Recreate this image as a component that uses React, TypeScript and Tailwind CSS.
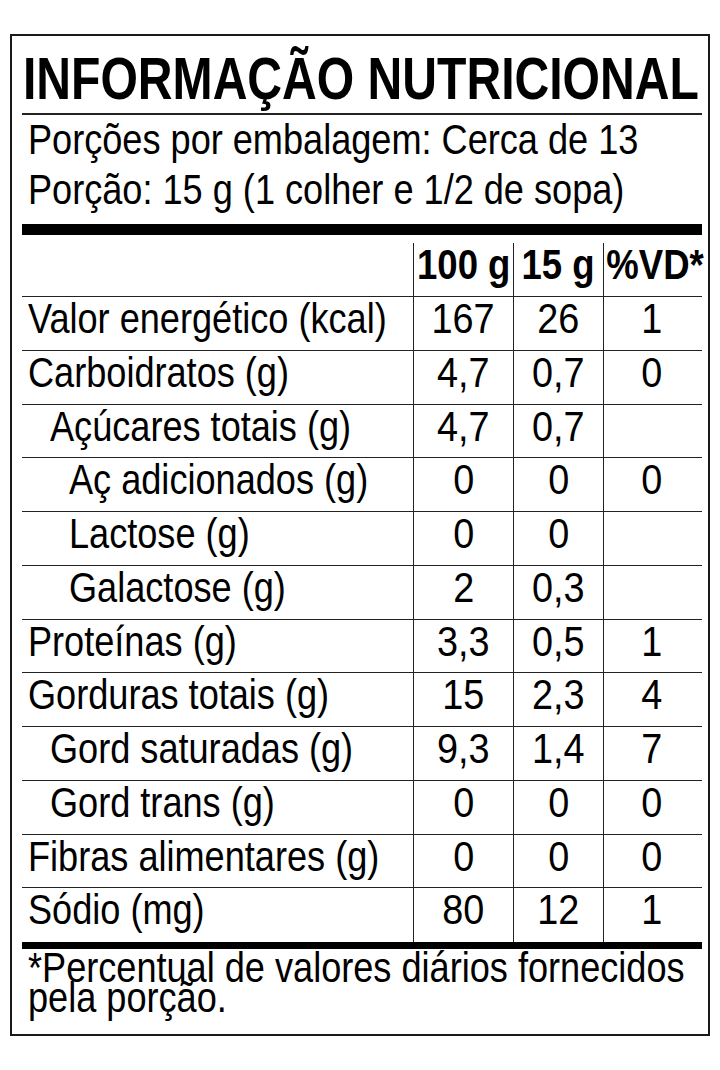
import React from "react";

type Row = { label: string; indent: 0 | 1 | 2; a: string; b: string; c: string };

const rows: Row[] = [
  { label: "Valor energético (kcal)", indent: 0, a: "167", b: "26", c: "1" },
  { label: "Carboidratos (g)", indent: 0, a: "4,7", b: "0,7", c: "0" },
  { label: "Açúcares totais (g)", indent: 1, a: "4,7", b: "0,7", c: "" },
  { label: "Aç adicionados (g)", indent: 2, a: "0", b: "0", c: "0" },
  { label: "Lactose (g)", indent: 2, a: "0", b: "0", c: "" },
  { label: "Galactose (g)", indent: 2, a: "2", b: "0,3", c: "" },
  { label: "Proteínas (g)", indent: 0, a: "3,3", b: "0,5", c: "1" },
  { label: "Gorduras totais (g)", indent: 0, a: "15", b: "2,3", c: "4" },
  { label: "Gord saturadas (g)", indent: 1, a: "9,3", b: "1,4", c: "7" },
  { label: "Gord trans (g)", indent: 1, a: "0", b: "0", c: "0" },
  { label: "Fibras alimentares (g)", indent: 0, a: "0", b: "0", c: "0" },
  { label: "Sódio (mg)", indent: 0, a: "80", b: "12", c: "1" },
];

const font = { fontFamily: '"Liberation Sans", Arial, sans-serif' };

function L({ children }: { children: React.ReactNode }) {
  return <span className="inline-block whitespace-nowrap origin-left scale-x-[0.86]">{children}</span>;
}

function V({ children }: { children: React.ReactNode }) {
  return <span className="inline-block whitespace-nowrap origin-center scale-x-[0.9]">{children}</span>;
}

function H({ children }: { children: React.ReactNode }) {
  return <span className="inline-block whitespace-nowrap origin-center scale-x-[0.87]">{children}</span>;
}

export default function App() {
  return (
    <div className="bg-white w-[720px] h-[1070px] pt-[34px] pl-[10px] text-black overflow-hidden" style={font}>
      <div className="w-[700px] h-[1002px] border-2 border-[#1a1a1a] pl-[10px] pr-[6px] flex flex-col">
        {/* Title */}
        <div className="h-[79px] pt-[14px] border-b-2 border-[#222]">
          <div className="text-[59px] font-bold leading-none whitespace-nowrap pl-[1px]">
            <span className="inline-block origin-left scale-x-[0.815]">INFORMAÇÃO NUTRICIONAL</span>
          </div>
        </div>
        {/* Serving */}
        <div className="h-[109px] pl-[6px] text-[42px] leading-[50px] whitespace-nowrap">
          <div>
            <L>Porções por embalagem: Cerca de 13</L>
          </div>
          <div>
            <L>Porção: 15 g (1 colher e 1/2 de sopa)</L>
          </div>
        </div>
        {/* Thick bar */}
        <div className="h-[11px] bg-black" />
        {/* Header */}
        <div className="h-[62px] flex items-end border-b-[1.5px] border-[#222] text-[42px] font-bold leading-none">
          <div className="w-[391px] h-[53px]" />
          <div className="w-[100px] h-[53px] border-l-[1.5px] border-[#222] flex justify-center pt-[1px]">
            <H>100 g</H>
          </div>
          <div className="w-[90px] h-[53px] border-l-[1.5px] border-[#222] flex justify-center pt-[1px]">
            <H>15 g</H>
          </div>
          <div className="w-[97px] h-[53px] border-l-[1.5px] border-[#222] flex justify-center pt-[1px] pl-[6px]">
            <H>%VD*</H>
          </div>
        </div>
        {/* Rows */}
        {rows.map((r, i) => (
          <div
            key={i}
            className={
              "h-[53.75px] flex text-[42px] leading-none " +
              (i < rows.length - 1 ? "border-b-[1.5px] border-[#222]" : "")
            }
          >
            <div
              className={
                "w-[391px] pt-[1px] " +
                (r.indent === 0 ? "pl-[6px]" : r.indent === 1 ? "pl-[28px]" : "pl-[47px]")
              }
            >
              <L>{r.label}</L>
            </div>
            <div className="w-[100px] border-l-[1.5px] border-[#222] flex justify-center pt-[1px]">
              <V>{r.a}</V>
            </div>
            <div className="w-[90px] border-l-[1.5px] border-[#222] flex justify-center pt-[1px]">
              <V>{r.b}</V>
            </div>
            <div className="w-[97px] border-l-[1.5px] border-[#222] flex justify-center pt-[1px]">
              <V>{r.c}</V>
            </div>
          </div>
        ))}
        {/* Bottom bar */}
        <div className="h-[7px] bg-black" />
        {/* Footnote */}
        <div className="pl-[6px] pt-[4px] text-[42px] leading-[30px] whitespace-nowrap">
          <div>
            <L>*Percentual de valores diários fornecidos</L>
          </div>
          <div>
            <L>pela porção.</L>
          </div>
        </div>
      </div>
    </div>
  );
}
